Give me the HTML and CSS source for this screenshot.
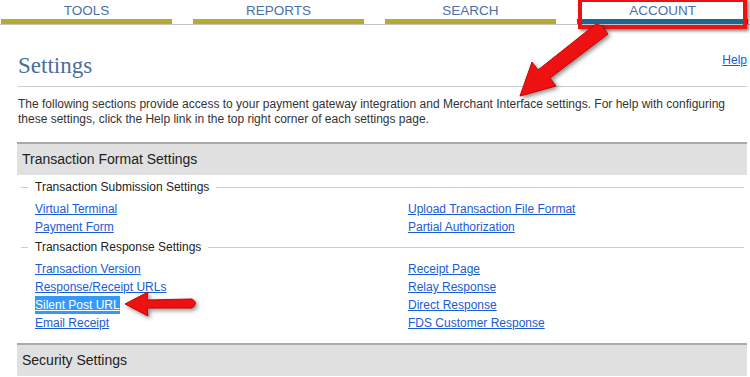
FILE: index.html
```html
<!DOCTYPE html>
<html lang="en">
<head>
    <meta charset="UTF-8">
    <title>Settings - Merchant Interface</title>
    <link rel="stylesheet" href="styles.css">
</head>
<body>
    <!-- Top tabs -->
    <nav class="tabs">
        <a class="tab" href="#">TOOLS</a>
        <a class="tab" href="#">REPORTS</a>
        <a class="tab" href="#">SEARCH</a>
        <a class="tab active" href="#">ACCOUNT</a>
    </nav>

    <div class="content">
        <div class="page-title">
            <h1>Settings</h1>
            <a href="#" class="help">Help</a>
        </div>

        <p class="intro">The following sections provide access to your payment gateway integration and Merchant Interface settings. For help with configuring these settings, click the Help link in the top right corner of each settings page.</p>

        <div class="section-head">Transaction Format Settings</div>

        <div class="group">
            <div class="legend"><span>Transaction Submission Settings</span></div>
            <div class="links">
                <a href="#">Virtual Terminal</a>
                <a href="#">Upload Transaction File Format</a>
                <a href="#">Payment Form</a>
                <a href="#">Partial Authorization</a>
            </div>
        </div>

        <div class="group">
            <div class="legend"><span>Transaction Response Settings</span></div>
            <div class="links">
                <a href="#">Transaction Version</a>
                <a href="#">Receipt Page</a>
                <a href="#">Response/Receipt URLs</a>
                <a href="#">Relay Response</a>
                <a href="#" class="selected">Silent Post URL</a>
                <a href="#">Direct Response</a>
                <a href="#">Email Receipt</a>
                <a href="#">FDS Customer Response</a>
            </div>
        </div>

        <div class="section-head security">Security Settings</div>
    </div>

    <!-- Annotations drawn over the page -->
    <div class="mark-box"></div>
    <svg class="arrow arrow-down" width="110" height="80" viewBox="0 0 110 80">
        <path d="M94 6 L100 14 L42 58 L48 66 L12 76 L24 42 L30 50 L88 4 Z" fill="#ee1111" stroke="#cc0000" stroke-width="1"/>
    </svg>
    <svg class="arrow arrow-left" width="80" height="30" viewBox="0 0 80 30">
        <path d="M3 14 L26 2 L25 10 L70 9 Q77 13 70 18 L25 18 L26 26 Z" fill="#ee1111" stroke="#cc0000" stroke-width="1"/>
    </svg>
</body>
</html>
```

FILE: styles.css
```css
/* General */
body {
    margin: 0;
    font-family: 'Liberation Sans', Arial, sans-serif;
    font-size: 12px;
    color: #333;
    background: #fff;
    position: relative;
}

a {
    color: #1a5bd6;
}

/* Tabs */
.tabs {
    display: flex;
    gap: 21px;
    padding-left: 1px;
    border-bottom: 1px solid #c4c4c4;
}

.tab {
    width: 171px;
    height: 19px;
    line-height: 21px;
    text-align: center;
    font-size: 13.5px;
    color: #4a6fa5;
    text-decoration: none;
    border-bottom: 5px solid #b8a935;
}

.tab.active {
    border-bottom-color: #236391;
}

/* Content */
.content {
    padding: 0 3px 0 17px;
}

.page-title {
    display: flex;
    justify-content: space-between;
    align-items: flex-start;
    margin-left: 1px;
    padding-top: 28px;
    border-bottom: 1px solid #cccccc;
    height: 33px;
}

h1 {
    margin: 0;
    font-family: 'Liberation Serif', Georgia, serif;
    font-weight: normal;
    font-size: 23px;
    color: #4a6d9c;
}

.help {
    font-size: 12px;
}

.intro {
    margin: 10px 0 15px 1px;
    line-height: 15px;
}

.section-head {
    background: #e0e0e0;
    border-top: 2px solid #aaaaaa;
    height: 31px;
    line-height: 31px;
    padding-left: 5px;
    font-size: 14px;
    color: #222;
}

.group {
    padding: 1px 0 0 4px;
}

.legend {
    display: flex;
    align-items: center;
    height: 22px;
    font-size: 12px;
    color: #222;
}

.legend::before {
    content: '';
    width: 7px;
    border-top: 1px solid #cccccc;
}

.legend span {
    padding: 0 7px;
}

.legend::after {
    content: '';
    flex: 1;
    border-top: 1px solid #cccccc;
    margin-right: 3px;
}

.links {
    display: grid;
    grid-template-columns: 373px 1fr;
    padding-left: 14px;
    margin: 2px 0 -1px;
}

.links a {
    justify-self: start;
    line-height: 18px;
}

.links a.selected {
    background: #3399ff;
    color: #fff;
}

.section-head.security {
    margin-top: 12px;
}

/* Annotations */
.mark-box {
    position: absolute;
    left: 578px;
    top: -2px;
    width: 161px;
    height: 23px;
    border: 4px solid #ee1111;
    box-shadow: 2px 2px 3px rgba(0, 0, 0, 0.5);
}

.arrow {
    position: absolute;
    filter: drop-shadow(2px 2px 2px rgba(0, 0, 0, 0.45));
}

.arrow-down {
    left: 508px;
    top: 20px;
}

.arrow-left {
    left: 122px;
    top: 290px;
}
```
